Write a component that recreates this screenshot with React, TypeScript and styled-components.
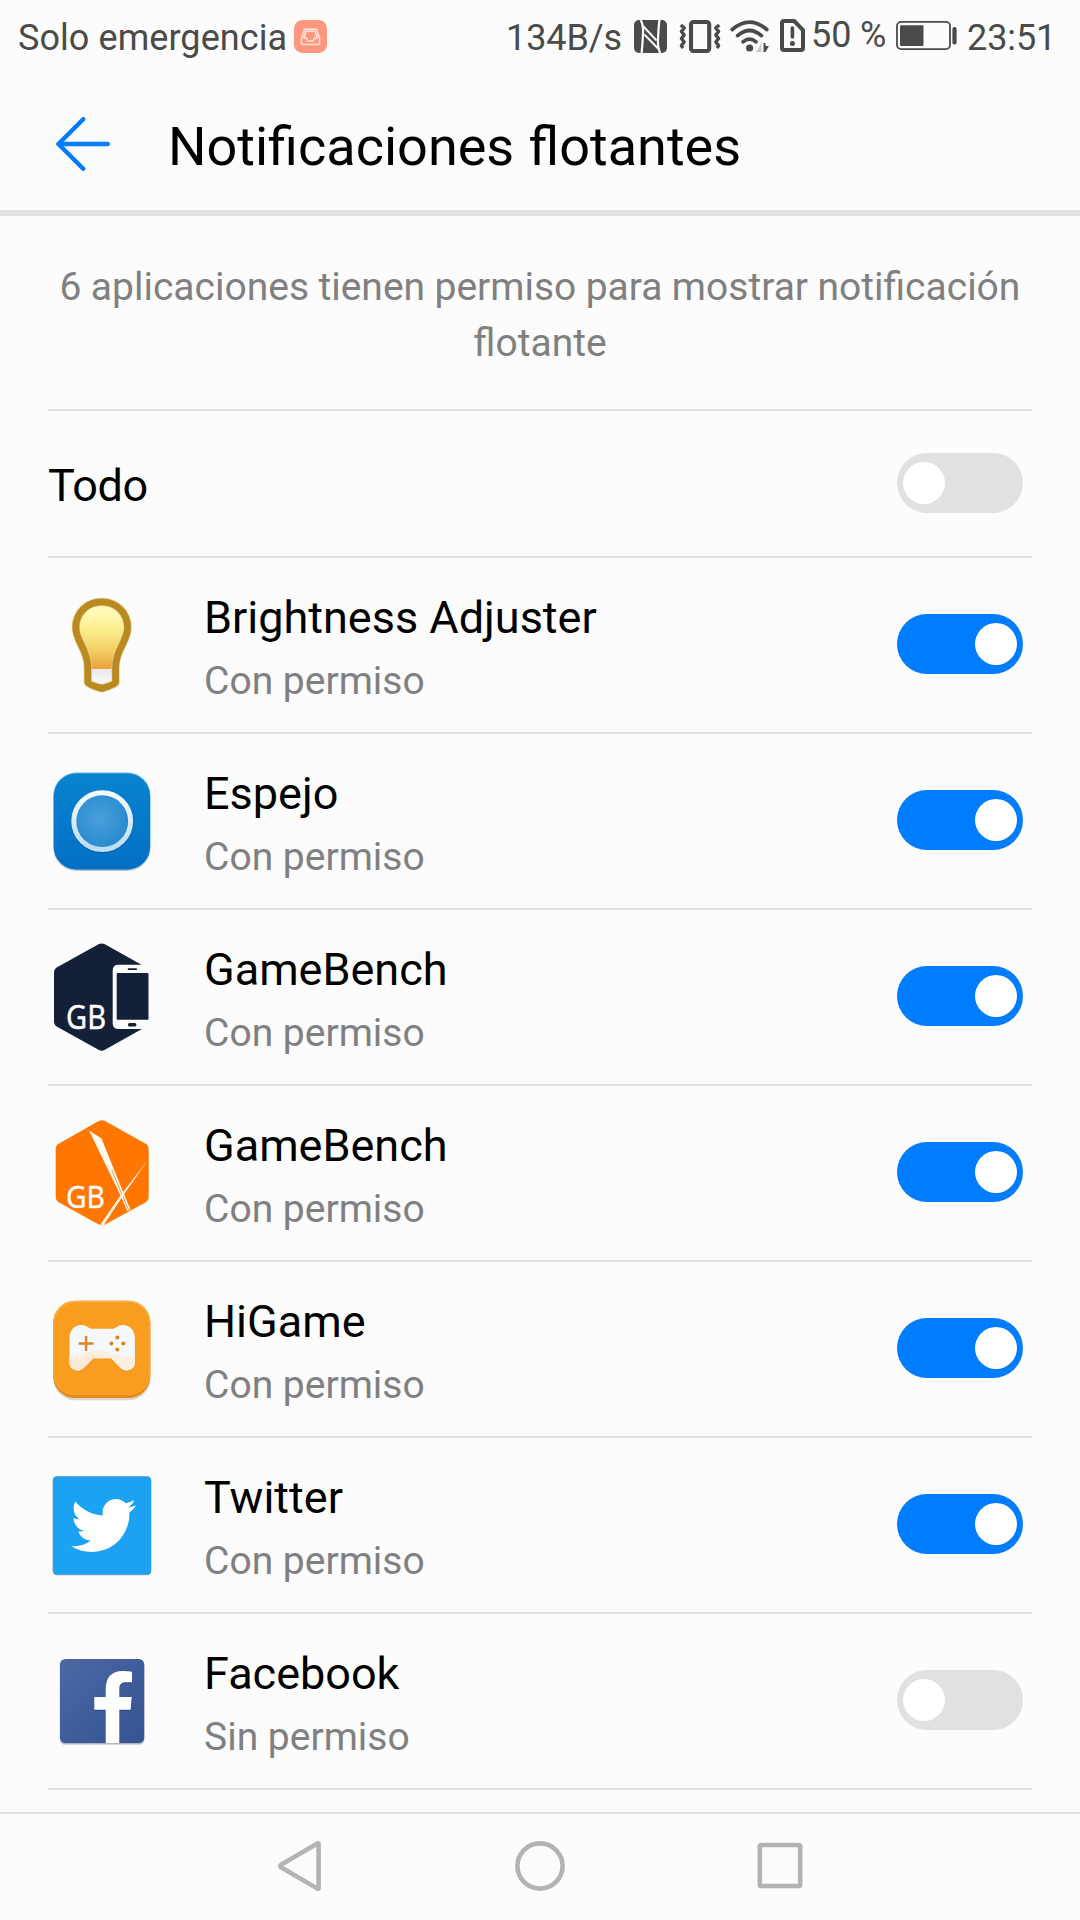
import React, { useState } from "react";
import styled, { createGlobalStyle } from "styled-components";

const INK = "#4a4a4a";
const BLUE = "#007dff";
const LINE = "#e1e1e1";

const GlobalStyle = createGlobalStyle`
  * { box-sizing: border-box; }
  html, body { margin: 0; padding: 0; background: #fcfcfc; }
  svg { display: block; flex: none; }
`;

const Screen = styled.div`
  width: 1080px;
  height: 1920px;
  display: flex;
  flex-direction: column;
  overflow: hidden;
  background: #fcfcfc;
  font-family: Roboto, "Liberation Sans", sans-serif;
  color: #000;
`;

const StatusBar = styled.div`
  height: 75px;
  flex: none;
  display: flex;
  align-items: flex-start;
  padding: 0 26px 0 18px;
  color: ${INK};
`;

const StatusText = styled.span<{ $left?: number; $top?: number; $width: number; $spacing?: number }>`
  width: ${(p) => p.$width}px;
  margin-left: ${(p) => p.$left ?? 0}px;
  margin-top: ${(p) => p.$top ?? 17}px;
  font-size: 36px;
  line-height: 42px;
  letter-spacing: ${(p) => p.$spacing ?? 0}px;
  white-space: nowrap;
`;

const StatusIcon = styled.svg<{ $left?: number; $top?: number }>`
  margin-left: ${(p) => p.$left ?? 0}px;
  margin-top: ${(p) => p.$top ?? 20}px;
`;

const StatusGroup = styled.div`
  display: flex;
  align-items: flex-start;
  margin-left: auto;
`;

const Header = styled.header`
  height: 141px;
  flex: none;
  display: flex;
  align-items: flex-start;
  padding: 42px 0 0 54px;
  border-bottom: 6px solid ${LINE};
`;

const BackButton = styled.button`
  border: 0;
  padding: 0;
  margin: 0 54px 0 0;
  background: none;
`;

const Title = styled.h1`
  margin: 0;
  padding: 0 0 0 4px;
  font-size: 54px;
  font-weight: 400;
  line-height: 60px;
  word-spacing: 1px;
`;

const Content = styled.main`
  flex: 1;
  min-height: 0;
  padding: 0 48px;
  overflow: hidden;
`;

const Summary = styled.p`
  margin: 0;
  height: 195px;
  padding: 43px 0 0;
  border-bottom: 2px solid ${LINE};
  font-size: 39px;
  line-height: 56px;
  word-spacing: -0.3px;
  text-align: center;
  color: #808080;
`;

const AllRow = styled.div`
  height: 147px;
  display: flex;
  align-items: center;
  justify-content: space-between;
  padding: 0 9px 0 0;
  border-bottom: 2px solid ${LINE};
`;

const AllLabel = styled.span`
  padding-top: 4px;
  font-size: 45px;
  line-height: 60px;
  letter-spacing: -0.4px;
`;

const AppRow = styled.div`
  height: 176px;
  display: flex;
  align-items: center;
  padding-right: 9px;
  border-bottom: 2px solid ${LINE};
`;

const AppText = styled.div`
  flex: 1;
  align-self: flex-start;
  padding: 30px 0 0 48px;
`;

const AppName = styled.div`
  font-size: 45px;
  line-height: 60px;
`;

const AppStatus = styled.div`
  font-size: 39px;
  line-height: 67px;
  color: #808080;
`;

const Switch = styled.button<{ $on: boolean }>`
  width: 126px;
  height: 60px;
  flex: none;
  display: flex;
  align-items: center;
  justify-content: ${(p) => (p.$on ? "flex-end" : "flex-start")};
  margin: 0 0 2px;
  padding: 0 6px;
  border: 0;
  border-radius: 30px;
  background: ${(p) => (p.$on ? BLUE : LINE)};
`;

const Knob = styled.span`
  width: 42px;
  height: 42px;
  border-radius: 50%;
  background: #fff;
`;

const NavBar = styled.nav`
  height: 108px;
  flex: none;
  display: flex;
  align-items: center;
  justify-content: space-between;
  padding: 0 276px 2px;
  border-top: 2px solid ${LINE};
`;

function BulbIcon() {
  const shape =
    "M53.7 10.8C38.5 10.8 27.8 22.5 27.8 36.5C27.8 51 39.8 58 39.8 76V91.5Q40.2 93.8 53.7 97.4Q67.2 93.8 67.6 91.5V76C67.6 58 79.6 51 79.6 36.5C79.6 22.5 68.9 10.8 53.7 10.8Z";
  return (
    <svg width="108" height="108" viewBox="0 0 108 108">
      <defs>
        <linearGradient id="bulbFill" x1="0" y1="0" x2="0" y2="1">
          <stop offset="0" stopColor="#fffdc8" />
          <stop offset=".3" stopColor="#fdf192" />
          <stop offset=".55" stopColor="#f3d068" />
          <stop offset=".77" stopColor="#e9a33a" />
          <stop offset=".775" stopColor="#e8e6ea" />
          <stop offset="1" stopColor="#ffffff" />
        </linearGradient>
      </defs>
      <path d={shape} fill="url(#bulbFill)" stroke="#ead08a" strokeWidth="8.2" />
      <path d={shape} fill="none" stroke="#b98a22" strokeWidth="6.8" strokeLinejoin="round" />
    </svg>
  );
}

function MirrorIcon() {
  return (
    <svg width="108" height="108" viewBox="0 0 108 108">
      <defs>
        <linearGradient id="mirrorBg" x1="0" y1="0" x2="0" y2="1">
          <stop offset="0" stopColor="#0884d0" />
          <stop offset="1" stopColor="#046fc4" />
        </linearGradient>
        <radialGradient id="mirrorGlass" cx=".45" cy=".45" r=".6">
          <stop offset="0" stopColor="#4a9fd9" />
          <stop offset="1" stopColor="#2488ce" />
        </radialGradient>
        <linearGradient id="mirrorRing" x1="0" y1="0" x2="0" y2="1">
          <stop offset="0" stopColor="#f7fafc" />
          <stop offset="1" stopColor="#bcdcf2" />
        </linearGradient>
      </defs>
      <rect x="5.4" y="6.9" width="97" height="97" rx="23" fill="#9aa4ad" opacity=".6" />
      <rect x="5.4" y="5.6" width="97" height="97" rx="23" fill="#5fb4e8" />
      <rect x="5.8" y="6.6" width="96.2" height="95.8" rx="22.5" fill="url(#mirrorBg)" />
      <circle cx="54.2" cy="55.6" r="31" fill="#035a9f" opacity=".6" />
      <circle cx="54.2" cy="54.2" r="28.4" fill="url(#mirrorGlass)" />
      <path d="M66 28.7A28 28 0 0 1 66 79.7A32 32 0 0 0 66 28.7Z" fill="#1f84cb" opacity=".8" />
      <circle cx="54.2" cy="54.2" r="28.4" fill="none" stroke="url(#mirrorRing)" strokeWidth="5" />
    </svg>
  );
}

function BenchPhoneIcon() {
  return (
    <svg width="108" height="108" viewBox="0 0 108 108">
      <path
        d="M50.5 1.3Q53.7-.4 56.9 1.3L97.5 24Q101 26 101 29.5V78.5Q101 82 97.5 84L56.9 106.8Q53.7 108.6 50.5 106.8L9.5 84Q6 82 6 78.5V29.5Q6 26 9.5 24Z"
        fill="#142038"
      />
      <path d="M70.5 21.7H102V86H70.5Q64.7 86 64.7 80.2V27.5Q64.7 21.7 70.5 21.7Z" fill="#fcfcfc" />
      <rect x="68.7" y="30" width="31.8" height="46.7" rx="1" fill="#142038" />
      <rect x="79.7" y="25.2" width="9.3" height="1.9" rx="1" fill="#142038" />
      <rect x="80" y="80" width="8.4" height="3.6" rx="1.6" fill="#142038" />
      <text x="18" y="86.4" textLength="40" lengthAdjust="spacingAndGlyphs" fontFamily="Noto Sans, sans-serif" fontSize="32" fill="#fff" stroke="#fff" strokeWidth=".4">
        GB
      </text>
    </svg>
  );
}

function BenchBladeIcon() {
  return (
    <svg width="108" height="108" viewBox="0 0 108 108">
      <path
        d="M50.7 2Q53.9.3 57.1 2L97.3 24.6Q100.7 26.6 100.7 30V78Q100.7 81.4 97.3 83.4L57.1 105.6Q53.9 107.2 50.7 105.6L11.1 83.4Q7.7 81.4 7.7 78V30Q7.7 26.6 11.1 24.6Z"
        fill="#ff7700"
      />
      <path d="M41.2 11.7L53.4 19.3L74.5 71.5L82.4 90.6L79.4 92.2L71 73.2Z" fill="#fffaf4" />
      <path d="M63.8 51L80.9 91.8" stroke="#ff8a25" strokeWidth=".9" />
      <path d="M100.5 40.2L74 78.2L55.6 106.3H51.9L72.4 76.4Z" fill="#fff3e6" />
      <text x="18" y="89" textLength="39" lengthAdjust="spacingAndGlyphs" fontFamily="Noto Sans, sans-serif" fontSize="31.5" fill="#fff" stroke="#fff" strokeWidth=".3">
        GB
      </text>
    </svg>
  );
}

function GamepadIcon() {
  return (
    <svg width="108" height="108" viewBox="0 0 108 108">
      <defs>
        <clipPath id="padClip">
          <path d="M21.4 44C21.4 35 26.5 30 33.2 30C39 30 40.5 33.8 44 33.8H64.3C67.8 33.8 69.3 30 75.1 30C81.8 30 86.9 35 86.9 44V67.5C86.9 72.5 83 75.4 78.5 75.4C75.5 75.4 73.6 74.4 71.8 72.3L63 63.2H45.3L36.5 72.3C34.7 74.4 32.8 75.4 29.8 75.4C25.3 75.4 21.4 72.5 21.4 67.5Z" />
        </clipPath>
      </defs>
      <rect x="5.2" y="8.3" width="97.2" height="97" rx="22" fill="#bfb6aa" opacity=".55" />
      <rect x="5.2" y="5.7" width="97.2" height="97.4" rx="22" fill="#e58a16" />
      <rect x="5.2" y="5.7" width="97.2" height="94.4" rx="22" fill="#fbb048" />
      <rect x="6.2" y="7.5" width="95.2" height="92.2" rx="21" fill="#f89d20" />
      <g transform="translate(0 1.4)" opacity=".25">
        <rect x="21" y="30" width="66" height="45.6" rx="9" fill="#d97c08" clipPath="url(#padClip)" />
      </g>
      <g clipPath="url(#padClip)">
        <rect x="20" y="29" width="68" height="48" fill="#f6f9fc" />
        <path d="M20 60.5Q32 61 42 57Q55 54 66 59Q76 63 88 60.5V77H20Z" fill="#fbefdf" />
        <path d="M20 64Q33 66 43 60Q48 58 54 58V77H20Z" fill="#f8e9d5" opacity=".7" />
      </g>
      <path d="M38.1 41V56M30.6 48.5H45.6" stroke="#dc8420" strokeWidth="2.4" />
      <g fill="#dc8420">
        <circle cx="69.3" cy="42.4" r="2" />
        <circle cx="63.4" cy="48.6" r="2" />
        <circle cx="75.3" cy="48.6" r="2" />
        <circle cx="69.3" cy="54.5" r="2" />
      </g>
    </svg>
  );
}

function TwitterIcon() {
  return (
    <svg width="108" height="108" viewBox="0 0 108 108">
      <rect x="4.7" y="5.2" width="98.6" height="99" rx="4.2" fill="#94a3ad" />
      <rect x="4.9" y="5.4" width="98.2" height="98" rx="4" fill="#1da1f2" />
      <path
        transform="translate(23 22) scale(2.71)"
        fill="#fff"
        d="M23.954 4.569c-.885.389-1.83.654-2.825.775 1.014-.611 1.794-1.574 2.163-2.723-.951.555-2.005.959-3.127 1.184-.896-.959-2.173-1.559-3.591-1.559-2.717 0-4.92 2.203-4.92 4.917 0 .39.045.765.127 1.124C7.691 8.094 4.066 6.13 1.64 3.161c-.427.722-.666 1.561-.666 2.475 0 1.71.87 3.213 2.188 4.096-.807-.026-1.566-.248-2.228-.616v.061c0 2.385 1.693 4.374 3.946 4.827-.413.111-.849.171-1.296.171-.314 0-.615-.03-.916-.086.631 1.953 2.445 3.377 4.604 3.417-1.68 1.319-3.809 2.105-6.102 2.105-.39 0-.779-.023-1.17-.067 2.189 1.394 4.768 2.209 7.557 2.209 9.054 0 13.999-7.496 13.999-13.986 0-.209 0-.42-.015-.63.961-.689 1.8-1.56 2.46-2.548l-.047-.02z"
      />
    </svg>
  );
}

function FacebookIcon() {
  const letter =
    "M57.7 96V62.7H46.3V50H57.7V42.5C57.7 30.5 63.5 24 74.5 24Q80 24 84 24.8V35.2H78.2C73 35.2 71.3 37.4 71.3 42V50H83.7L82.6 62.7H71.3V96Z";
  return (
    <svg width="108" height="108" viewBox="0 0 108 108">
      <defs>
        <linearGradient id="fbBg" x1="0" y1="0" x2="1" y2="1">
          <stop offset="0" stopColor="#4c69a4" />
          <stop offset=".6" stopColor="#3d5b99" />
          <stop offset="1" stopColor="#385492" />
        </linearGradient>
      </defs>
      <rect x="11.8" y="14" width="84.6" height="84" rx="5.5" fill="#b9bcc4" opacity=".6" />
      <rect x="11.9" y="13" width="84.4" height="84" rx="5.5" fill="#a6abb8" opacity=".8" />
      <rect x="12" y="12" width="84.2" height="84" rx="5.5" fill="url(#fbBg)" />
      <path d={letter} fill="#2c467f" opacity=".5" transform="translate(0 1.6)" clipPath="inset(0 0 2px 0)" />
      <path d={letter} fill="#fff" />
    </svg>
  );
}

const apps = [
  { name: "Brightness Adjuster", on: true, Icon: BulbIcon },
  { name: "Espejo", on: true, Icon: MirrorIcon },
  { name: "GameBench", on: true, Icon: BenchPhoneIcon },
  { name: "GameBench", on: true, Icon: BenchBladeIcon },
  { name: "HiGame", on: true, Icon: GamepadIcon },
  { name: "Twitter", on: true, Icon: TwitterIcon },
  { name: "Facebook", on: false, Icon: FacebookIcon },
];

function Status() {
  return (
    <StatusBar>
      <StatusText $width={276} $spacing={0.07}>
        Solo emergencia
      </StatusText>
      <StatusIcon width="33" height="33" viewBox="0 0 33 33">
        <rect width="33" height="33" rx="8.5" fill="#ff977f" />
        <g fill="none" stroke="#ffe4dd" strokeWidth="1.5" strokeLinejoin="round">
          <path d="M10.6 9.2H22.4L25.6 18.2V22.6Q25.6 24.6 23.6 24.6H9.4Q7.4 24.6 7.4 22.6V18.2Z" />
          <path d="M11.9 11.2H21.1L23.3 18H20.6L18.9 21H14.1L12.4 18H9.7Z" />
        </g>
      </StatusIcon>
      <StatusGroup>
        <StatusText $width={128} $spacing={-0.1}>
          134B/s
        </StatusText>
        <StatusIcon width="33" height="33" viewBox="0 0 33 33">
          <rect width="33" height="33" rx="5" fill={INK} />
          <g fill="none" stroke="#fcfcfc">
            <path d="M6.6 0Q9.4 4 9 14T7.6 33" strokeWidth="2.2" />
            <path d="M26.4 33Q23.6 29 24 19T25.4 0" strokeWidth="2.2" />
            <path d="M9 6L22.6 20.5" strokeWidth="1.9" />
            <path d="M10.4 14.5L24 28.5" strokeWidth="1.9" />
          </g>
        </StatusIcon>
        <StatusIcon $left={12} width="42" height="33" viewBox="0 0 42 33" fill="none" stroke={INK}>
          <rect x="12" y="2" width="18.2" height="29" rx="2.6" strokeWidth="4.1" />
          <path
            d="M1.8 5L5.2 8L2.4 11.5L5.2 15L2.4 18.5L5.2 22L2.4 25.5L4 28M40.2 5L36.8 8L39.6 11.5L36.8 15L39.6 18.5L36.8 22L39.6 25.5L38 28"
            strokeWidth="3.4"
            strokeLinejoin="round"
          />
        </StatusIcon>
        <StatusIcon $left={9} width="41" height="33" viewBox="0 0 41 33" fill="none" stroke={INK} strokeWidth="3.7" strokeLinecap="round">
          <path d="M2.2 9.5Q19.5-5.4 36.8 9.5M7.6 15.6Q19.5 5.4 31.4 15.6M13 21.8Q19.5 16.4 26 21.8" />
          <circle cx="19.6" cy="28" r="3.6" fill={INK} stroke="none" />
          <path d="M31.5 23V32H26Z" fill="#c9c9c9" stroke="none" />
          <path d="M33.5 23V32H35.5L39 26H35.5V23Z" fill={INK} stroke="none" />
        </StatusIcon>
        <StatusIcon $left={9} $top={19} width="25" height="33" viewBox="0 0 25 33">
          <path d="M4 2H14.2L23 11V29Q23 31 21 31H4Q2 31 2 29V4Q2 2 4 2Z" fill="none" stroke={INK} strokeWidth="4" />
          <path d="M12.4 9V18" stroke={INK} strokeWidth="3.6" strokeLinecap="round" />
          <circle cx="12.4" cy="24.5" r="2.5" fill={INK} />
        </StatusIcon>
        <StatusText $left={6} $top={14} $width={85} $spacing={-0.1}>
          50 %
        </StatusText>
        <StatusIcon width="61" height="30" viewBox="0 0 61 30">
          <rect x="1" y="1.9" width="53" height="27.2" rx="4" fill="none" stroke={INK} strokeWidth="1.8" />
          <rect x="4" y="5.2" width="23.5" height="20.8" rx="1" fill={INK} />
          <rect x="56.4" y="7" width="4.2" height="17.6" rx="2" fill={INK} />
        </StatusIcon>
        <StatusText $left={10} $width={87} $spacing={-0.1}>
          23:51
        </StatusText>
      </StatusGroup>
    </StatusBar>
  );
}

export default function App() {
  const [all, setAll] = useState(false);
  const [enabled, setEnabled] = useState(apps.map((a) => a.on));
  return (
    <>
      <GlobalStyle />
      <Screen>
        <Status />
        <Header>
          <BackButton aria-label="Atrás">
            <svg width="56" height="56" viewBox="0 0 56 56" fill="none" stroke={BLUE} strokeWidth="4.4" strokeLinecap="round" strokeLinejoin="round">
              <path d="M29.2 2.2L4.4 27L29.2 51.8M4.4 27H53.8" />
            </svg>
          </BackButton>
          <Title>Notificaciones flotantes</Title>
        </Header>
        <Content>
          <Summary>6 aplicaciones tienen permiso para mostrar notificación flotante</Summary>
          <AllRow>
            <AllLabel>Todo</AllLabel>
            <Switch $on={all} onClick={() => setAll(!all)}>
              <Knob />
            </Switch>
          </AllRow>
          {apps.map(({ name, Icon }, i) => (
            <AppRow key={i}>
              <Icon />
              <AppText>
                <AppName>{name}</AppName>
                <AppStatus>{enabled[i] ? "Con permiso" : "Sin permiso"}</AppStatus>
              </AppText>
              <Switch $on={enabled[i]} onClick={() => setEnabled(enabled.map((v, j) => (j === i ? !v : v)))}>
                <Knob />
              </Switch>
            </AppRow>
          ))}
        </Content>
        <NavBar>
          <svg width="48" height="54" viewBox="0 0 48 54" fill="none" stroke="#b3b3b3" strokeWidth="4.6" strokeLinejoin="round">
            <path d="M42.6 4.6V49.4Q42.4 50.2 41.4 49.6L5 28.2Q3.6 27 5 25.8L41.4 4.4Q42.4 3.8 42.6 4.6Z" />
          </svg>
          <svg width="54" height="54" viewBox="0 0 54 54" fill="none" stroke="#b3b3b3" strokeWidth="4.6">
            <circle cx="27" cy="27" r="22.6" />
          </svg>
          <svg width="48" height="54" viewBox="0 0 48 54" fill="none" stroke="#b3b3b3" strokeWidth="4.6">
            <rect x="3.8" y="6" width="40.4" height="41" rx="1.6" />
          </svg>
        </NavBar>
      </Screen>
    </>
  );
}
